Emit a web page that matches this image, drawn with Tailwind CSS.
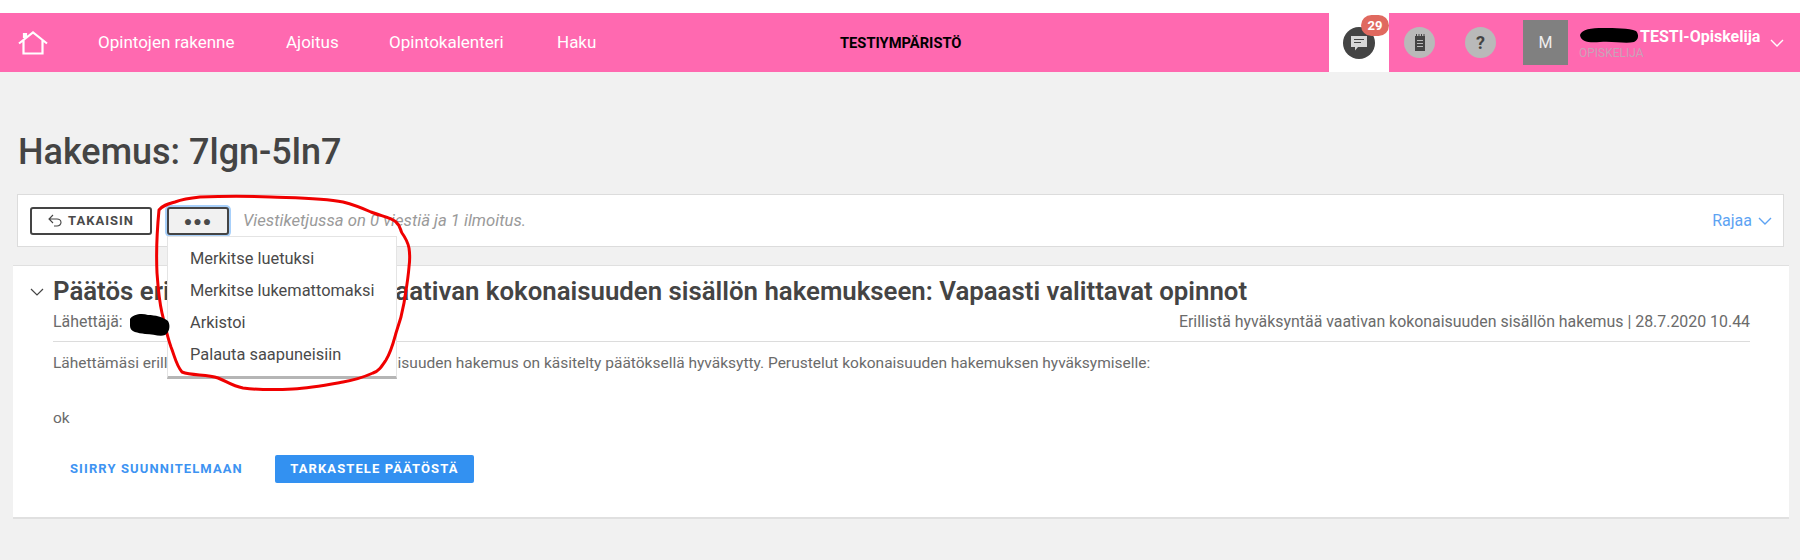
<!DOCTYPE html>
<html lang="en">
<head>
  <meta charset="UTF-8" />
  <title>Hakemus</title>
  <script src="https://cdn.jsdelivr.net/npm/@tailwindcss/browser@4"></script>
</head>
<body class="bg-[#f1f1f1] text-[#4a4a4a] font-['Roboto',sans-serif] w-[1800px] h-[560px] overflow-hidden relative">
  <!-- Top bar -->
  <div class="h-[13px] bg-white"></div>
  <header class="h-[59px] bg-[#ff69b0] flex items-center text-white relative">
    <svg class="ml-[18px] w-[30px] h-[24px]" viewBox="0 0 30 24" fill="none" stroke="white" stroke-width="2.2">
      <path d="M1 12.5 15 1.5l14 11M5.5 9.5V22.500h19V9.500M6 7V3h2v3" />
    </svg>
    <nav class="flex items-center text-[17px] ml-[50px]">
      <a href="#" class="w-[188px]">Opintojen rakenne</a>
      <a href="#" class="w-[103px]">Ajoitus</a>
      <a href="#" class="w-[168px]">Opintokalenteri</a>
      <a href="#">Haku</a>
    </nav>
    <div class="absolute left-[840px] top-[19px] text-[14.700px] font-bold text-black">TESTIYMPÄRISTÖ</div>
    <div class="ml-auto flex items-center h-full">
      <div class="w-[60px] h-full bg-white flex items-center justify-center relative">
        <div class="w-[32px] h-[32px] rounded-full bg-[#444] flex items-center justify-center">
          <svg class="w-[16px] h-[16px]" viewBox="0 0 16 16"><path d="M0 1h16v11H7l-3 3.500V12H0z" fill="#d8d8d8" /><path d="M3 4.500h10M3 7.500h7" stroke="#444" /></svg>
        </div>
        <span class="absolute left-[32px] top-[2px] w-[28px] h-[21px] rounded-full bg-[#e0695f] text-white text-[13px] font-bold flex items-center justify-center">29</span>
      </div>
      <div class="w-[31px] h-[31px] rounded-full bg-[#b9b9b9] ml-[15px] flex items-center justify-center">
        <svg class="w-[12px] h-[17px]" viewBox="0 0 12 17"><path d="M1 2h10v15H1z" fill="#444" /><path d="M2.500 0v3M5 0v3M7.500 0v3M10 0v3" stroke="#444" /><path d="M3 6.500h6M3 9.500h6M3 12.500h6" stroke="#b9b9b9" /></svg>
      </div>
      <div class="w-[31px] h-[31px] rounded-full bg-[#b9b9b9] ml-[30px] flex items-center justify-center text-[#444] text-[18px] font-bold">?</div>
      <div class="w-[45px] h-[45px] bg-[#808080] ml-[27px] flex items-center justify-center text-[16px] text-[#eee]">M</div>
      <div class="ml-[11px] w-[191px] relative h-full">
        <div class="absolute left-[61px] top-[12px] text-[16px] font-bold whitespace-nowrap">TESTI-Opiskelija</div>
        <div class="absolute left-0 top-[31px] text-[12px] text-[#c9a3b8] whitespace-nowrap">OPISKELIJA</div>
        <svg class="absolute left-0 top-[14px] w-[60px] h-[18px]" viewBox="0 0 60 18"><path d="M1 8C3 2 12 1 24 1s26 0 33 3c3 3 3 9-2 11-9 2-20-1-34 0C10 16 2 15 1 8z" fill="#000" /></svg>
      </div>
      <svg class="w-[14px] h-[8px] mr-[16px]" viewBox="0 0 14 8" fill="none" stroke="white" stroke-width="1.400"><path d="M1 1l6 6 6-6" /></svg>
    </div>
  </header>

  <main class="relative pt-[58px]">
    <h1 class="ml-[18px] text-[36px] leading-[44px] font-medium text-[#444]">Hakemus: 7lgn-5ln7</h1>

    <!-- Toolbar -->
    <div class="ml-[17px] mr-[16px] mt-[20px] h-[53px] bg-white border border-[#dcdcdc] flex items-center pl-[12px] pr-[11px]">
      <button class="w-[122px] h-[28px] border-2 border-[#444] rounded-[3px] flex items-center justify-center gap-[6px] text-[13px] font-bold tracking-[1px]">
        <svg class="w-[14px] h-[13px]" viewBox="0 0 14 13" fill="none" stroke="#444" stroke-width="1.100"><path d="M5 1 1 5l4 4M1 5h8a4 3.500 0 0 1 0 7H6" /></svg>
        TAKAISIN
      </button>
      <button class="ml-[15px] w-[62px] h-[28px] bg-[#f1f1f1] border-2 border-[#444] rounded-[3px] text-[14px] font-bold leading-none tracking-[1px] ring-2 ring-[#a8d0fa]">●●●</button>
      <span class="ml-[14px] text-[16.700px] italic text-[#9a9a9a]">Viestiketjussa on 0 viestiä ja 1 ilmoitus.</span>
      <span class="ml-auto text-[16px] text-[#5da3f3] flex items-center gap-[6px]">Rajaa
        <svg class="w-[14px] h-[8px]" viewBox="0 0 14 8" fill="none" stroke="#5da3f3" stroke-width="1.400"><path d="M1 1l6 6 6-6" /></svg>
      </span>
    </div>

    <!-- Message card -->
    <article class="ml-[13px] mr-[11px] mt-[18px] h-[254px] bg-white border-t border-b-2 border-[#e0e0e0] pl-[40px] pr-[39px] relative">
      <svg class="absolute left-[17px] top-[22px] w-[14px] h-[8px]" viewBox="0 0 14 8" fill="none" stroke="#444" stroke-width="1.200"><path d="M1 1l6 6 6-6" /></svg>
      <h2 class="mt-[9px] text-[25.800px] leading-[32px] font-semibold text-[#444] whitespace-nowrap">Päätös erillistä hyväksyntää vaativan kokonaisuuden sisällön hakemukseen: Vapaasti valittavat opinnot</h2>
      <div class="flex justify-between mt-[5px] pb-[9px] border-b border-[#dcdcdc] text-[15.900px] leading-[20px] text-[#6b6b6b]">
        <span>Lähettäjä:</span>
        <span>Erillistä hyväksyntää vaativan kokonaisuuden sisällön hakemus | 28.7.2020 10.44</span>
      </div>
      <p class="mt-[11px] text-[15.500px] leading-[20px] text-[#6b6b6b]">Lähettämäsi erillistä hyväksyntää vaativan kokonaisuuden hakemus on käsitelty päätöksellä hyväksytty. Perustelut kokonaisuuden hakemuksen hyväksymiselle:</p>
      <p class="mt-[35px] text-[15.500px] leading-[20px] text-[#6b6b6b]">ok</p>
      <div class="flex items-center mt-[27px]">
        <a href="#" class="ml-[17px] text-[13px] font-bold tracking-[1.100px] text-[#3d93f2]">SIIRRY SUUNNITELMAAN</a>
        <button class="ml-[32px] w-[199px] h-[28px] bg-[#3391f1] rounded-[2px] text-white text-[13px] font-bold tracking-[1.100px]">TARKASTELE PÄÄTÖSTÄ</button>
      </div>
    </article>

    <!-- Dropdown -->
    <div class="absolute left-[167px] top-[164px] w-[230px] h-[143px] bg-white border border-[#e4e4e4] border-b-[3px] border-b-[#b5b5b5] pt-[6px] pl-[22px] text-[16.400px] leading-[32px] text-[#4a4a4a]">
      <div>Merkitse luetuksi</div>
      <div>Merkitse lukemattomaksi</div>
      <div>Arkistoi</div>
      <div>Palauta saapuneisiin</div>
    </div>
  </main>

  <!-- Scribbles over the screenshot -->
  <svg class="absolute left-0 top-0 pointer-events-none" width="1800" height="560" fill="none">
    <path d="M159 210C163 205 168 204 175 202C183 199 190 198 200 197C225 196 248 196 271 197C296 198 322 198 343 202C355 205 362 208 371 212C381 216 392 218 396 222C401 226 400 230 402 233C407 240 408 243 409 248C410 255 410 260 409 267C408 280 406 290 404 303C402 315 400 322 396 333C393 344 391 352 386 360C382 366 379 371 373 373C364 377 355 380 343 382C326 385 310 388 293 389C276 390 260 390 243 388C232 386 226 381 218 378C206 374 192 376 182 372C176 365 175 357 171 347C167 336 165 325 162 313C159 300 158 287 157 273C156 252 157 231 159 210Z" stroke="#f00000" stroke-width="3" />
    <path d="M130 319c3-5 12-6 18-4 7 0 15 2 20 6 3 5 1 12-3 14-5 2-12-1-20-1-7-1-15-2-15-8z" fill="#000" />
  </svg>
</body>
</html>
